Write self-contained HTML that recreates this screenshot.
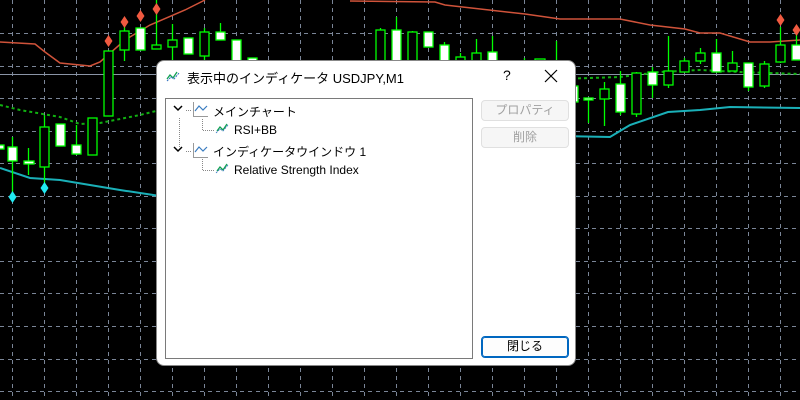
<!DOCTYPE html>
<html><head><meta charset="utf-8"><style>
*{margin:0;padding:0;box-sizing:border-box}
body{width:800px;height:400px;background:#000;position:relative;overflow:hidden;font-family:"Liberation Sans","Noto Sans CJK JP",sans-serif}
svg{position:absolute;left:0;top:0}
.dlg{position:absolute;left:156px;top:60px;width:420px;height:306px;background:#fff;border-radius:8px;border:1px solid #888}
.t{position:absolute;font-size:12px;color:#000;white-space:nowrap}
.btn{position:absolute;left:324px;width:88px;height:21px;border:1px solid #e0e0e0;background:#f6f6f6;border-radius:4px;color:#a0a0a0;font-size:12px;text-align:center;line-height:19px}
.tree{position:absolute;left:8px;top:37px;width:308px;height:261px;border:1px solid #7a7a7a;background:#fff}
</style></head><body>
<svg width="800" height="400">
<g stroke="#7a8597" stroke-dasharray="4,4" stroke-width="1">
<path d="M12.5 0V400M44.5 0V400M76.5 0V400M108.5 0V400M140.5 0V400M172.5 0V400M204.5 0V400M236.5 0V400M268.5 0V400M300.5 0V400M332.5 0V400M364.5 0V400M396.5 0V400M428.5 0V400M460.5 0V400M492.5 0V400M524.5 0V400M556.5 0V400M588.5 0V400M620.5 0V400M652.5 0V400M684.5 0V400M716.5 0V400M748.5 0V400M780.5 0V400"/>
<path d="M0 33.5H800M0 66.5H800M0 98.5H800M0 131.5H800M0 163.5H800M0 196.5H800M0 228.5H800M0 261.5H800M0 293.5H800M0 326.5H800M0 359.5H800M0 391.5H800"/>
</g>
<path d="M0 74.5H800" stroke="#8a94a6"/>
<path d="M0 42L35 44L45 52L60 63L90 66L100 62L125 40L150 25L185 10L205 0M350 1L435 2L445 5L525 14L560 19L620 19L650 25L685 29L700 33L720 33L750 42L770 42L800 40" stroke="#d0533a" stroke-width="1.5" fill="none"/>
<path d="M0 105L20 110L60 117L80 124L100 123L140 115L160 110M560 79L620 77L660 72L700 70L740 72L800 74" stroke="#10b010" stroke-width="2" stroke-dasharray="3,3" fill="none"/>
<path d="M0 168L30 178L60 180L120 190L160 196M560 136L610 137L630 125L668 112L700 110L730 107L800 108" stroke="#1ab0b8" stroke-width="2" fill="none"/>
<g stroke="#00ff00" stroke-width="1.3">
<path d="M12.5 137V197M28.5 148V175M44.5 115V185M76.5 125V155M124.5 26V61M156.5 0V45M172.5 24V60M204.5 28V60M220.5 23V40M380.5 28V60M396.5 17V60M412.5 31V60M444.5 42V60M460.5 53V60M476.5 39V60M492.5 36V60M524.5 58V60M556.5 41V60M588.5 98V123M604.5 82V126M620.5 71V115M636.5 72V117M652.5 67V98M668.5 36V88M684.5 58V72M700.5 48V64M716.5 39V72M732.5 51V71M748.5 63V91M764.5 61V88M780.5 27V63M796.5 30V45"/>
</g>
<g stroke="#00ff00" stroke-width="1.3">
<rect x="-4" y="145" width="8" height="4" fill="#fff"/>
<rect x="8" y="147" width="9" height="14" fill="#fff"/>
<rect x="24" y="161" width="10" height="3" fill="#fff"/>
<rect x="40" y="127" width="9" height="40" fill="#000"/>
<rect x="56" y="124" width="9" height="22" fill="#fff"/>
<rect x="72" y="145" width="9" height="9" fill="#fff"/>
<rect x="88" y="118" width="9" height="37" fill="#000"/>
<rect x="104" y="51" width="9" height="65" fill="#000"/>
<rect x="120" y="31" width="9" height="19" fill="#000"/>
<rect x="136" y="28" width="9" height="22" fill="#fff"/>
<rect x="152" y="45" width="9" height="4" fill="#000"/>
<rect x="168" y="40" width="9" height="7" fill="#000"/>
<rect x="184" y="38" width="9" height="16" fill="#fff"/>
<rect x="200" y="32" width="9" height="24" fill="#000"/>
<rect x="216" y="32" width="9" height="8" fill="#fff"/>
<rect x="232" y="40" width="9" height="22" fill="#fff"/>
<rect x="248" y="58" width="9" height="8" fill="#fff"/>
<rect x="376" y="30" width="9" height="32" fill="#000"/>
<rect x="392" y="30" width="9" height="32" fill="#fff"/>
<rect x="408" y="32" width="9" height="30" fill="#000"/>
<rect x="424" y="32" width="9" height="15" fill="#fff"/>
<rect x="440" y="45" width="9" height="17" fill="#fff"/>
<rect x="456" y="57" width="9" height="5" fill="#000"/>
<rect x="472" y="53" width="9" height="9" fill="#000"/>
<rect x="488" y="52" width="9" height="10" fill="#fff"/>
<rect x="535" y="59" width="10" height="4" fill="#000"/>
<rect x="574" y="86" width="4" height="16" fill="#fff"/>
<rect x="584" y="98" width="9" height="2" fill="#fff"/>
<rect x="600" y="89" width="9" height="10" fill="#000"/>
<rect x="616" y="84" width="9" height="28" fill="#fff"/>
<rect x="632" y="73" width="9" height="41" fill="#000"/>
<rect x="648" y="72" width="9" height="13" fill="#fff"/>
<rect x="664" y="71" width="9" height="14" fill="#000"/>
<rect x="680" y="61" width="9" height="11" fill="#000"/>
<rect x="696" y="53" width="9" height="8" fill="#000"/>
<rect x="712" y="53" width="9" height="19" fill="#fff"/>
<rect x="728" y="63" width="9" height="8" fill="#000"/>
<rect x="744" y="63" width="9" height="24" fill="#fff"/>
<rect x="760" y="64" width="9" height="22" fill="#000"/>
<rect x="776" y="45" width="9" height="17" fill="#000"/>
<rect x="792" y="45" width="9" height="15" fill="#fff"/>
</g>
<g fill="#f05a40">
<path d="M108.5 35l4 6-4 6-4-6z"/><path d="M124.5 16l4 6-4 6-4-6z"/><path d="M140.5 10l4 6-4 6-4-6z"/><path d="M156.5 3l4 6-4 6-4-6z"/><path d="M780.5 14l4 6-4 6-4-6z"/><path d="M796.5 24l4 6-4 6-4-6z"/>
</g>
<g fill="#20e8f0"><path d="M12.5 191l4 6-4 6-4-6z"/><path d="M44.5 182l4 6-4 6-4-6z"/></g>
</svg>
<div class="dlg">
<svg width="16" height="12" style="left:9px;top:9px"><path d="M1 9l3-4 3 3 4-6" stroke="#10a050" stroke-width="1.3" fill="none"/><path d="M1 11l4-4 3 2 5-6" stroke="#3070c0" stroke-width="1" fill="none" stroke-dasharray="2,1"/></svg>
<div class="t" style="left:30px;top:7px;font-size:13px">表示中のインディケータ USDJPY,M1</div>
<div class="t" style="left:346px;top:6px;font-size:14px">?</div>
<svg width="14" height="14" style="left:387px;top:8px"><path d="M1 1L13 13M13 1L1 13" stroke="#000" stroke-width="1.2"/></svg>
<div class="tree">
<svg width="120" height="80" style="left:0;top:0">
<path d="M8 7l4 4 4-4M8 48l4 4 4-4" stroke="#000" stroke-width="1.5" fill="none"/>
<path d="M13.5 19V48M36.5 20V31.5H48M36.5 60V71.5H48M20 11.5H25M20 52.5H25" stroke="#888" stroke-dasharray="1,1" fill="none"/>
<path d="M27.5 3V17.5H42M27.5 44V58.5H42" stroke="#999" fill="none"/>
<path d="M29 12l4-5 4 4 4-4M29 53l4-5 4 4 4-4" stroke="#3a7cc0" stroke-width="1.2" fill="none"/>
<path d="M51 32l3-4 3 3 4-6M51 72l3-4 3 3 4-6" stroke="#10a050" stroke-width="1.3" fill="none"/>
<path d="M50 34l4-4 3 2 5-6M50 74l4-4 3 2 5-6" stroke="#3070c0" stroke-width="0.8" fill="none" stroke-dasharray="2,1"/>
</svg>
<div class="t" style="left:47px;top:4px">メインチャート</div>
<div class="t" style="left:68px;top:24px">RSI+BB</div>
<div class="t" style="left:47px;top:44px">インディケータウインドウ 1</div>
<div class="t" style="left:68px;top:64px">Relative Strength Index</div>
</div>
<div class="btn" style="top:39px">プロパティ</div>
<div class="btn" style="top:66px">削除</div>
<div class="btn" style="top:275px;border:1px solid #0067c0;background:#fdfdfd;color:#000;height:22px;box-shadow:inset 0 0 0 1px #0067c0">閉じる</div>
</div>
</body></html>
